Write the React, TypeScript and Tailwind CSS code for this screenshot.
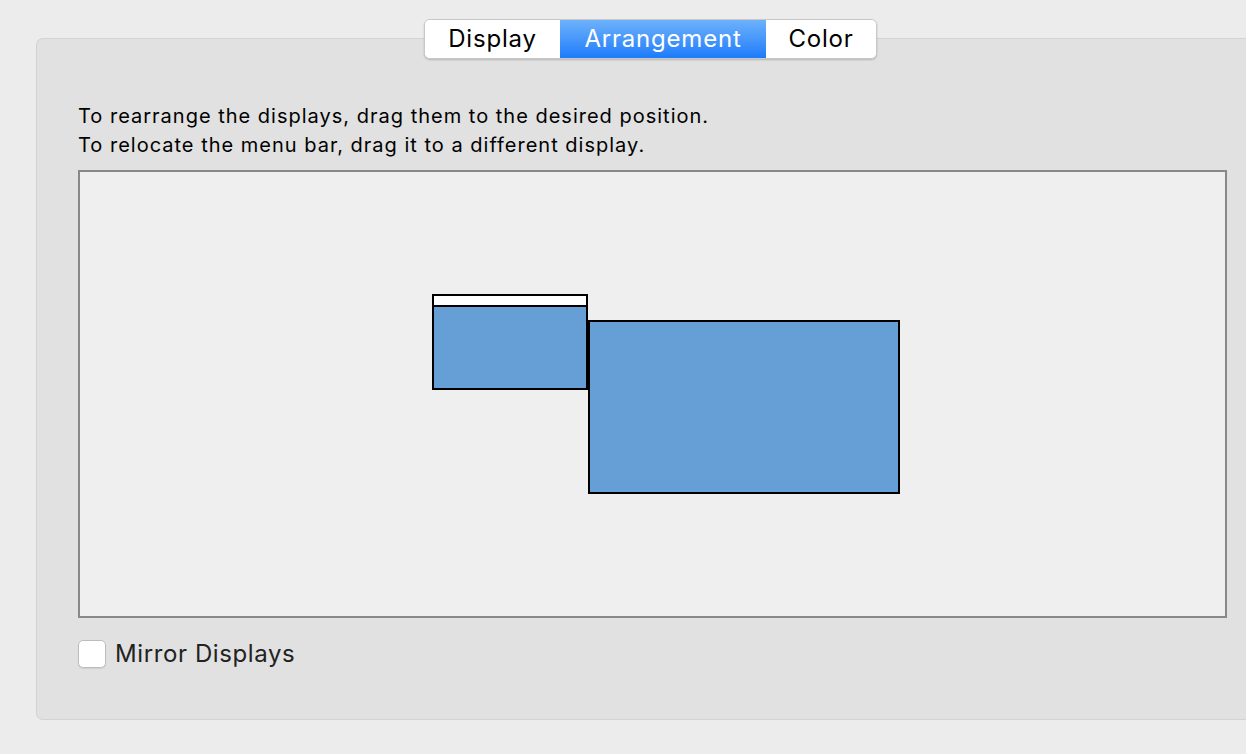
import React, { useState } from 'react';

const tabs = ['Display', 'Arrangement', 'Color'];

const App = () => {
  const [active, setActive] = useState('Arrangement');
  const [mirror, setMirror] = useState(false);

  return (
    <div className="relative w-full h-[754px] bg-[#ececec] overflow-hidden font-['Inter','Liberation_Sans',Arial,sans-serif]">
      {/* Panel */}
      <div className="ml-[36px] mt-[38px] h-[682px] bg-[#e1e1e1] border border-[#d3d3d3] border-r-0 rounded-tl-[7px] rounded-bl-[7px] pl-[41px] pt-[63px]">
        <div className="text-[20px] leading-[29px] text-black tracking-[1px]">
          <p>To rearrange the displays, drag them to the desired position.</p>
          <p>To relocate the menu bar, drag it to a different display.</p>
        </div>

        {/* Arrangement canvas */}
        <div className="relative mt-[10px] w-[1149px] h-[448px] border-2 border-[#888888] bg-[#efefef]">
          <div className="absolute left-[352px] top-[122px] w-[156px] h-[96px] border-2 border-black bg-[#659fd5]">
            <div className="h-[11px] bg-white border-b-2 border-black" />
          </div>
          <div className="absolute left-[508px] top-[148px] w-[312px] h-[174px] border-2 border-black bg-[#659fd5]" />
        </div>

        {/* Mirror checkbox */}
        <label className="mt-[18px] flex items-center gap-[9px] cursor-pointer w-fit">
          <span
            onClick={() => setMirror(!mirror)}
            className="w-[28px] h-[28px] rounded-[5px] bg-white border border-[#bdbdbd] shadow-[0_1px_1px_rgba(0,0,0,0.08)] flex items-center justify-center text-[#222] text-[18px]"
          >
            {mirror ? '✓' : ''}
          </span>
          <span className="text-[24px] text-[#222] tracking-[0.6px]">Mirror Displays</span>
        </label>
      </div>

      {/* Segmented control */}
      <div className="absolute left-[424px] top-[19px] h-[40px] flex rounded-[6px] bg-white border border-[#c8c8c8] shadow-[0_1px_2px_rgba(0,0,0,0.2)] overflow-hidden">
        {tabs.map((t) => (
          <button
            key={t}
            onClick={() => setActive(t)}
            className={`h-full text-[24px] tracking-[0.8px] flex items-center justify-center ${
              t === 'Display' ? 'w-[135px]' : t === 'Arrangement' ? 'w-[206px]' : 'w-[110px]'
            } ${
              active === t
                ? 'bg-gradient-to-b from-[#6cb1fb] to-[#1b7bfa] text-white'
                : 'bg-white text-black'
            }`}
          >
            {t}
          </button>
        ))}
      </div>
    </div>
  );
};

export default App;
